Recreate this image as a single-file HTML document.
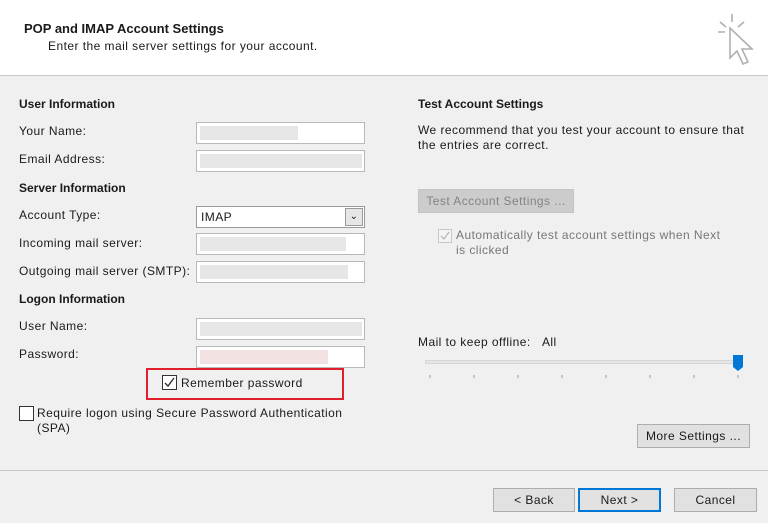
<!DOCTYPE html>
<html><head><style>
*{margin:0;padding:0;box-sizing:border-box}
body{width:768px;height:523px;background:#f0f0f0;font-family:"Liberation Sans",sans-serif;font-size:12px;letter-spacing:.45px;color:#1a1a1a;position:relative;overflow:hidden}
.a{position:absolute;white-space:nowrap}
.b{font-weight:bold;letter-spacing:0}
.in{position:absolute;left:196px;width:169px;height:22px;background:#fff;border:1px solid #b8b8b8}
.blur{position:absolute;left:3px;top:3px;height:14px;background:#e6e6e6}
.btn{position:absolute;height:24px;background:#e1e1e1;border:1px solid #adadad;text-align:center;line-height:22px}
</style></head><body>
<div class="a" style="left:0;top:0;width:768px;height:76px;background:#fff;border-bottom:1px solid #c8c8c8"></div>
<div class="a b" style="left:24px;top:21px;font-size:13px">POP and IMAP Account Settings</div>
<div class="a" style="left:48px;top:39px">Enter the mail server settings for your account.</div>
<svg class="a" style="left:712px;top:12px" width="44" height="60" viewBox="0 0 44 60"><g stroke="#b0b0b0" stroke-width="1.6" fill="none"><path d="M20 2v8M8 10l6 5M32 10l-6 5M6 20h7"/><path d="M18 16v30l7-7 6 13 5-2-6-13h10z" fill="#fff"/></g></svg>

<div class="a b" style="left:19px;top:97px">User Information</div>
<div class="a" style="left:19px;top:124px">Your Name:</div>
<div class="in" style="top:122px"><div class="blur" style="width:98px"></div></div>
<div class="a" style="left:19px;top:152px">Email Address:</div>
<div class="in" style="top:150px"><div class="blur" style="width:162px"></div></div>
<div class="a b" style="left:19px;top:181px">Server Information</div>
<div class="a" style="left:19px;top:208px">Account Type:</div>
<div class="in" style="top:206px;border-color:#9a9a9a"><span class="a" style="left:4px;top:3px">IMAP</span><div class="a" style="right:1px;top:1px;width:18px;height:18px;border:1px solid #999;background:#e6e6e6;text-align:center;line-height:16px;font-size:10px">&#8964;</div></div>
<div class="a" style="left:19px;top:236px">Incoming mail server:</div>
<div class="in" style="top:233px"><div class="blur" style="width:146px"></div></div>
<div class="a" style="left:19px;top:264px">Outgoing mail server (SMTP):</div>
<div class="in" style="top:261px"><div class="blur" style="width:148px"></div></div>
<div class="a b" style="left:19px;top:292px">Logon Information</div>
<div class="a" style="left:19px;top:319px">User Name:</div>
<div class="in" style="top:318px"><div class="blur" style="width:162px"></div></div>
<div class="a" style="left:19px;top:347px">Password:</div>
<div class="in" style="top:346px"><div class="blur" style="width:128px;background:#f3e2e2"></div></div>

<div class="a" style="left:146px;top:368px;width:198px;height:32px;border:2px solid #e0202a"></div>
<div class="a" style="left:162px;top:375px;width:15px;height:15px;border:1px solid #333;background:#fff"><svg width="13" height="13"><path d="M2 7l3 3 6-8" stroke="#333" stroke-width="1.4" fill="none"/></svg></div>
<div class="a" style="left:181px;top:376px">Remember password</div>
<div class="a" style="left:19px;top:406px;width:15px;height:15px;border:1px solid #333;background:#fff"></div>
<div class="a" style="left:37px;top:406px">Require logon using Secure Password Authentication</div>
<div class="a" style="left:37px;top:421px">(SPA)</div>

<div class="a b" style="left:418px;top:97px">Test Account Settings</div>
<div class="a" style="left:418px;top:123px">We recommend that you test your account to ensure that</div>
<div class="a" style="left:418px;top:138px">the entries are correct.</div>
<div class="btn" style="left:418px;top:189px;width:156px;background:#cccccc;border-color:#c4c4c4;color:#838383">Test Account Settings ...</div>
<div class="a" style="left:438px;top:229px;width:14px;height:14px;border:1px solid #c8c8c8;background:#f4f4f4"><svg width="12" height="12"><path d="M2 6l3 3 5-7" stroke="#b8b8b8" stroke-width="1.3" fill="none"/></svg></div>
<div class="a" style="left:456px;top:228px;color:#777">Automatically test account settings when Next</div>
<div class="a" style="left:456px;top:243px;color:#777">is clicked</div>
<div class="a" style="left:418px;top:335px">Mail to keep offline:&nbsp;&nbsp;&nbsp;All</div>
<div class="a" style="left:425px;top:360px;width:318px;height:4px;background:#e6e6e6;border:1px solid #d6d6d6"></div>
<svg class="a" style="left:732px;top:354px" width="12" height="18"><path d="M1 1h10v12l-5 4-5-4z" fill="#0078d7"/></svg>
<svg class="a" style="left:428px;top:375px" width="314" height="4"><g stroke="#999"><path d="M2 0v3M46 0v3M90 0v3M134 0v3M178 0v3M222 0v3M266 0v3M310 0v3"/></g></svg>
<div class="btn" style="left:637px;top:424px;width:113px">More Settings ...</div>

<div class="a" style="left:0;top:470px;width:768px;height:1px;background:#c8c8c8"></div>
<div class="btn" style="left:493px;top:488px;width:82px">&lt; Back</div>
<div class="btn" style="left:578px;top:488px;width:83px;border:2px solid #0078d7;line-height:20px">Next &gt;</div>
<div class="btn" style="left:674px;top:488px;width:83px">Cancel</div>
</body></html>
